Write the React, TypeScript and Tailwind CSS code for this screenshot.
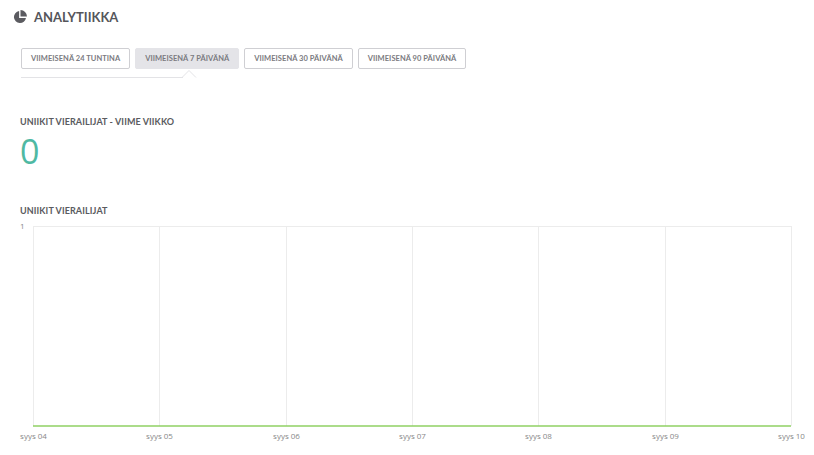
import React from "react";

const TABS = ["Viimeisenä 24 tuntina", "Viimeisenä 7 päivänä", "Viimeisenä 30 päivänä", "Viimeisenä 90 päivänä"];
const DAYS = ["syys 04", "syys 05", "syys 06", "syys 07", "syys 08", "syys 09", "syys 10"];

function PieIcon() {
  return (
    <svg viewBox="0 0 16 16" className="w-[14px] h-[14px]" fill="#5b5b60">
      <path d="M7 1.2A6.9 6.9 0 1 0 14.8 9H7z" />
      <path d="M8.6 0v7.4H16A7.6 7.6 0 0 0 8.6 0z" />
    </svg>
  );
}

function Chart() {
  const left = 33;
  const right = 791;
  const top = 6;
  const bottom = 206;
  const step = (right - left) / 6;
  return (
    <svg width="814" height="226" className="block">
      <text x="20" y={top + 3} fontSize="8" fill="#888" fontFamily="'Open Sans', sans-serif">1</text>
      <line x1={left} y1={top + 0.5} x2={right} y2={top + 0.5} stroke="#ececec" />
      {DAYS.map((d, i) => {
        const x = Math.round(left + step * i) + 0.5;
        return (
          <g key={d}>
            <line x1={x} y1={top} x2={x} y2={bottom} stroke="#ececec" />
            <text
              x={x}
              y={bottom + 13}
              fontSize="8"
              fill="#888"
              textAnchor="middle"
              fontFamily="'Open Sans', sans-serif"
            >
              {d}
            </text>
          </g>
        );
      })}
      <line x1={left} y1={bottom} x2={right} y2={bottom} stroke="#8fd163" strokeWidth="1.5" />
    </svg>
  );
}

export default function App() {
  return (
    <div className="w-[814px] h-[455px] bg-white overflow-hidden font-['Lato',sans-serif]">
      <div className="flex items-center gap-[7px] pl-[13px] pt-[10px]">
        <PieIcon />
        <h1 className="text-[13px] font-bold text-[#55565b] leading-none">ANALYTIIKKA</h1>
      </div>

      {/* Range tabs */}
      <div className="flex gap-[5px] pl-[21px] mt-[24px]">
        {TABS.map((t, i) => (
          <button
            key={t}
            className={
              i === 1
                ? "h-[21px] px-[9px] rounded-[2px] bg-[#e4e4e8] border border-[#e4e4e8] text-[7.5px] font-bold uppercase tracking-[0.05px] text-[#7a7a80]"
                : "h-[21px] px-[9px] rounded-[2px] bg-white border border-[#cfcfd3] text-[7.5px] font-bold uppercase tracking-[0.05px] text-[#7a7a80]"
            }
          >
            {t}
          </button>
        ))}
      </div>
      <div className="relative ml-[21px] mt-[1px] h-[8px] w-[176px]">
        <div className="absolute left-0 bottom-0 w-[162px] h-px bg-[#e3e3e6]" />
        <svg className="absolute left-[161px] bottom-0" width="16" height="8">
          <polyline points="0,7.5 7,0.5 14,7.5" fill="none" stroke="#e3e3e6" />
        </svg>
      </div>

      <div className="pl-[20px] mt-[39px]">
        <h2 className="text-[9px] font-bold uppercase tracking-[0.1px] text-[#5a5b60] leading-none">Uniikit vierailijat - viime viikko</h2>
        <div className="text-[34px] leading-none text-[#4fb9a3] mt-[8px] font-['Open_Sans',sans-serif]">0</div>
        <h2 className="text-[9px] font-bold uppercase tracking-[0.1px] text-[#5a5b60] leading-none mt-[38px]">Uniikit vierailijat</h2>
      </div>
      <div className="mt-[5px]">
        <Chart />
      </div>
    </div>
  );
}
